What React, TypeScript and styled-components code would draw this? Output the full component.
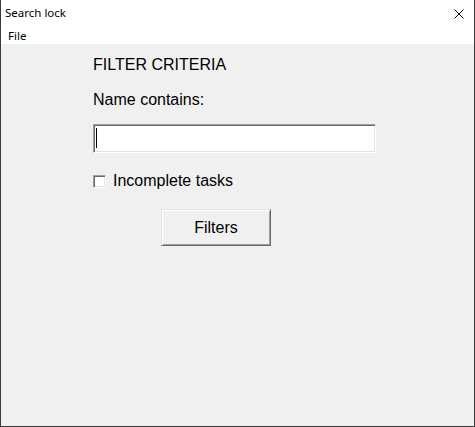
import styled, { createGlobalStyle } from "styled-components";

const GlobalStyle = createGlobalStyle`
  html, body {
    margin: 0;
    padding: 0;
    background: #f0f0f0;
  }
  * {
    box-sizing: border-box;
  }
`;

const Window = styled.div`
  width: 475px;
  height: 427px;
  display: flex;
  flex-direction: column;
  background-color: #f0f0f0;
  border-left: 1px solid #3a3a3a;
  border-right: 1px solid #3a3a3a;
  border-bottom: 1px solid #3a3a3a;
  font-family: "Liberation Sans", Arial, sans-serif;
  color: #000;
`;

const TitleBar = styled.div`
  height: 22px;
  display: flex;
  justify-content: space-between;
  align-items: flex-start;
  padding: 6px 0 0 4px;
  background-color: #fff;
  font-family: "Noto Sans", sans-serif;
  font-size: 11.5px;
  line-height: 14px;
`;

const CloseButton = styled.div`
  width: 10px;
  height: 10px;
  margin: 3px 10px 0 0;
  display: flex;
  svg {
    width: 10px;
    height: 10px;
  }
`;

const MenuBar = styled.div`
  height: 22px;
  padding: 7px 0 0 7px;
  background-color: #fff;
  font-family: "Noto Sans", sans-serif;
  font-size: 11.5px;
  line-height: 14px;
`;

const Content = styled.div`
  flex: 1;
  display: flex;
  flex-direction: column;
  align-items: flex-start;
  padding: 12px 0 0 92px;
  font-size: 16px;
  line-height: 18px;
`;

const Label = styled.div<{ $gap: number }>`
  margin-bottom: ${(props) => props.$gap}px;
`;

const TextBox = styled.div`
  width: 283px;
  height: 29px;
  padding: 3px 0 0 2px;
  background-color: #fff;
  border-style: solid;
  border-width: 1px;
  border-color: #a0a0a0 #ffffff #ffffff #a0a0a0;
  box-shadow: inset 1px 1px 0 #696969, inset -1px -1px 0 #e3e3e3;
  margin-bottom: 19px;
`;

const Caret = styled.span`
  display: block;
  width: 1px;
  height: 20px;
  background-color: #000;
`;

const CheckRow = styled.label`
  display: flex;
  align-items: flex-start;
  gap: 7px;
  margin-bottom: 19px;
`;

const CheckBox = styled.span`
  width: 13px;
  height: 13px;
  margin-top: 3px;
  background-color: #fff;
  border-style: solid;
  border-width: 1px;
  border-color: #a0a0a0 #ffffff #ffffff #a0a0a0;
  box-shadow: inset 1px 1px 0 #696969, inset -1px -1px 0 #e3e3e3;
`;

const Button = styled.button`
  width: 110px;
  height: 37px;
  margin-left: 68px;
  padding: 0;
  background-color: #f0f0f0;
  border-style: solid;
  border-width: 1px;
  border-color: #e3e3e3 #696969 #696969 #e3e3e3;
  box-shadow: inset 1px 1px 0 #ffffff, inset -1px -1px 0 #a0a0a0;
  font-family: "Liberation Sans", Arial, sans-serif;
  font-size: 16px;
  color: #000;
`;

const App = () => {
  return (
    <>
      <GlobalStyle />
      <Window>
        <TitleBar>
          <span>Search lock</span>
          <CloseButton>
            <svg viewBox="0 0 10 10" fill="none" stroke="#000" strokeWidth="1">
              <path d="M0.5 0.5 L9.5 9.5 M9.5 0.5 L0.5 9.5" />
            </svg>
          </CloseButton>
        </TitleBar>
        <MenuBar>File</MenuBar>
        <Content>
          <Label $gap={17}>FILTER CRITERIA</Label>
          <Label $gap={15}>Name contains:</Label>
          <TextBox>
            <Caret />
          </TextBox>
          <CheckRow>
            <CheckBox />
            Incomplete tasks
          </CheckRow>
          <Button>Filters</Button>
        </Content>
      </Window>
    </>
  );
};

export default App;
